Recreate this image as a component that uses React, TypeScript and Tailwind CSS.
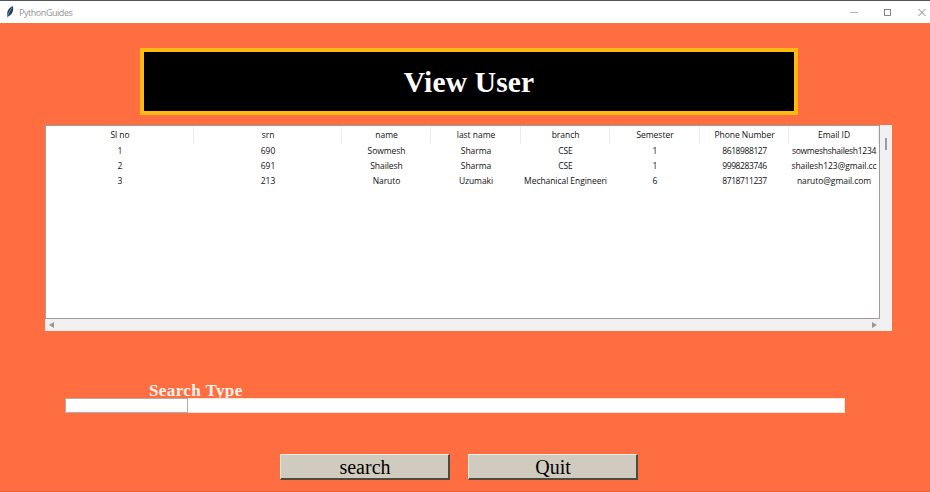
const columns = [
  { title: 'Sl no', cells: ['1', '2', '3'] },
  { title: 'srn', cells: ['690', '691', '213'] },
  { title: 'name', cells: ['Sowmesh', 'Shailesh', 'Naruto'] },
  { title: 'last name', cells: ['Sharma', 'Sharma', 'Uzumaki'] },
  { title: 'branch', cells: ['CSE', 'CSE', 'Mechanical Engineeri'] },
  { title: 'Semester', cells: ['1', '1', '6'] },
  { title: 'Phone Number', cells: ['8618988127', '9998283746', '8718711237'], digits: true },
  { title: 'Email ID', cells: ['sowmeshshailesh1234', 'shailesh123@gmail.cc', 'naruto@gmail.com'] },
];

function cellTracking(cell: string, digits?: boolean) {
  if (digits) return 'tracking-[-0.42px]';
  if (cell.length === 19) return 'tracking-[-0.28px]';
  return 'tracking-[-0.06px]';
}

function TitleBar() {
  return (
    <header className="flex h-[23px] shrink-0 items-center border-t border-[#55565c] bg-white text-[#949494]">
      <svg className="ml-[6px] h-3 w-2" viewBox="0 0 8 12" fill="none">
        <path d="M7 .2C3.8.8 1.2 4 1.2 8.2L1.6 11.8l1-1.8C6 9 7.8 5 7 .2Z" fill="#24415c" />
        <path d="M6 1.6C4.6 3.6 3 6 2 9" stroke="#8fa9bd" strokeWidth=".7" />
      </svg>
      <span className="ml-[5px] font-['Open_Sans',sans-serif] text-[9px] leading-none tracking-[-0.45px]">PythonGuides</span>
      <svg className="ml-auto h-[9px] w-[78px]" viewBox="0 0 78 9" fill="none" stroke="#777" strokeWidth=".9">
        <path d="M1 4.5h8" stroke="#aaa" />
        <rect x="35.5" y="1.5" width="6" height="6" />
        <path d="m69.5 1 7 7m0-7-7 7" />
      </svg>
      <span className="w-[3px]" />
    </header>
  );
}

function UserTable() {
  return (
    <section className="mt-[10px] ml-[45px] flex h-[206px] w-[847px] bg-[#f0f0f0]">
      <div className="flex w-[835px] flex-col">
        <div className="grid h-[194px] grid-cols-[148px_148px_89px_90px_89px_90px_89px_90px] overflow-hidden border border-[#a39b98] bg-white font-['Open_Sans',sans-serif] text-[8.5px] text-[#111]">
          {columns.map((col) => (
            <div key={col.title} className="flex flex-col items-center whitespace-nowrap">
              <div className="flex h-[18px] w-full items-center justify-center border-r border-[#ececec] pl-px tracking-[-0.03px]">{col.title}</div>
              {col.cells.map((cell, i) => (
                <div key={i} className={`flex h-[15px] items-center ${cellTracking(cell, col.digits)}`}>{cell}</div>
              ))}
            </div>
          ))}
        </div>
        <div className="flex h-3 items-center justify-between pr-[3px] pl-1">
          <svg className="h-[6px] w-[5px]" viewBox="0 0 5 6"><path d="M5 0v6L0 3Z" fill="#999" /></svg>
          <svg className="h-[6px] w-[5px]" viewBox="0 0 5 6"><path d="M0 0v6l5-3Z" fill="#999" /></svg>
        </div>
      </div>
      <div className="mt-[13px] ml-[5px] h-3 w-[2px] bg-[#999ba0]" />
    </section>
  );
}

function Button({ label }: { label: string }) {
  return (
    <button className="flex h-[26px] w-[170px] items-center justify-center border-t border-r-2 border-b-2 border-l border-t-[#eeece5] border-r-[#4d4a40] border-b-[#4d4a40] border-l-[#eeece5] bg-[#d1cbbf] pl-px text-[20px] leading-none text-black">
      {label}
    </button>
  );
}

export default function App() {
  return (
    <div className="flex h-[492px] w-[930px] flex-col overflow-hidden bg-[#ff6e40] font-['Liberation_Serif',serif]">
      <TitleBar />
      <main className="flex flex-1 flex-col border-b border-[#e5623b]">
        <h1 className="mt-[25px] ml-[140px] flex h-[67px] w-[658px] items-center justify-center border-4 border-[#ffb910] bg-black pt-px text-[29.5px] font-bold tracking-[0.15px] text-white">View User</h1>
        <UserTable />
        <div className="mt-[50px] ml-[149px] h-[17px] text-[17px] leading-[19px] font-bold tracking-[0.4px] text-[#fff3ed]">Search Type</div>
        <div className="relative ml-[65px] flex h-[15px] w-[780px] border border-[#ffe0d5] bg-white">
          <div className="-my-px -ml-px h-[15px] w-[123px] border border-[#b9aaa4]" />
        </div>
        <div className="mt-[41px] ml-[280px] flex gap-[18px]">
          <Button label="search" />
          <Button label="Quit" />
        </div>
      </main>
    </div>
  );
}
